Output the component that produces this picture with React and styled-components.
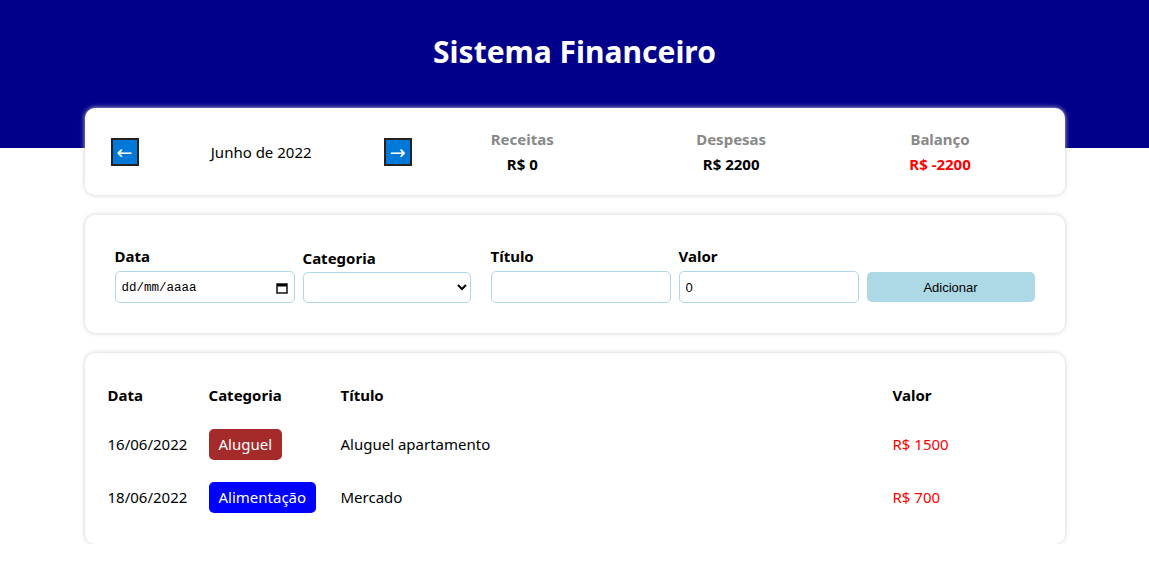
import React, { useState } from "react";
import styled, { createGlobalStyle } from "styled-components";

const GlobalStyle = createGlobalStyle`
  body {
    margin: 0;
    font-family: "Noto Sans", "Open Sans", sans-serif;
    background: #fff;
    color: #000;
  }
`;

const Header = styled.header`
  background-color: #00008b;
  height: 148px;
  padding-top: 10px;
  box-sizing: border-box;
  text-align: center;
`;

const HeaderText = styled.h1`
  margin: 21px 0 0;
  color: #fff;
  font-size: 30px;
  line-height: 42px;
  font-weight: 700;
`;

const Body = styled.div`
  width: 980px;
  margin: -40px auto 0;
  display: flex;
  flex-direction: column;
  gap: 20px;
`;

const Card = styled.div`
  background: #fff;
  border-radius: 10px;
  box-shadow: 0 0 5px #ccc;
  padding: ${({ $pad }) => $pad || "20px"};
`;

const InfoRow = styled.div`
  display: flex;
  align-items: center;
  height: 47px;
`;

const MonthArea = styled.div`
  flex: 1;
  display: flex;
  align-items: center;
  justify-content: space-between;
`;

const MonthArrow = styled.button`
  width: 28px;
  height: 28px;
  margin: 0 6px;
  padding: 0;
  background: #0078d7;
  border: 2px solid #222;
  color: #fff;
  font-size: 19px;
  line-height: 22px;
  font-family: "DejaVu Sans", sans-serif;
  cursor: pointer;
`;

const MonthTitle = styled.div`
  font-size: 15px;
`;

const ResumeArea = styled.div`
  flex: 2;
  display: flex;
`;

const ResumeItem = styled.div`
  flex: 1;
  text-align: center;
`;

const ResumeTitle = styled.div`
  color: #888;
  font-weight: 700;
  font-size: 15px;
  line-height: 20px;
  margin-bottom: 5px;
`;

const ResumeValue = styled.div`
  color: ${({ $color }) => $color || "#000"};
  font-weight: 700;
  font-size: 15px;
  line-height: 20px;
`;

const FormRow = styled.div`
  display: flex;
  align-items: flex-end;
`;

const Field = styled.label`
  display: flex;
  flex-direction: column;
  width: ${({ $w }) => $w}px;
  margin-right: ${({ $mr }) => $mr || 0}px;
`;

const FieldTitle = styled.div`
  font-weight: 700;
  font-size: 15px;
  line-height: 22px;
  margin-bottom: ${({ $mb }) => $mb ?? 4}px;
`;

const inputBase = `
  box-sizing: border-box;
  height: 32px;
  width: 100%;
  border: 1px solid #add8e6;
  border-radius: 5px;
  padding: 0 6px;
  font-size: 13px;
  font-family: "Liberation Sans", Arial, sans-serif;
  background: #fff;
  outline: none;
`;

const Input = styled.input`
  ${inputBase}
`;

const DateBox = styled.div`
  ${inputBase}
  display: flex;
  align-items: center;
  justify-content: space-between;
  padding-top: 2px;
  font-family: "Liberation Mono", monospace;
  font-size: 12.5px;
  color: #000;
`;

const Select = styled.select`
  ${inputBase}
  height: 31px;
  padding: 0 4px;
`;

const AddButton = styled.button`
  width: 168px;
  height: 30px;
  margin-bottom: 1px;
  border: none;
  border-radius: 5px;
  background: #add8e6;
  font-family: "Liberation Sans", Arial, sans-serif;
  font-size: 13px;
  color: #000;
  cursor: pointer;
`;

const Table = styled.table`
  width: 100%;
  border-collapse: collapse;
`;

const Th = styled.th`
  width: ${({ $w }) => ($w ? `${$w}px` : "auto")};
  text-align: left;
  font-size: 15px;
  line-height: 21px;
  padding: 12px 0 12px 3px;
`;

const Td = styled.td`
  font-size: 15px;
  line-height: 31px;
  padding: 11px 0 11px 3px;
  color: ${({ $color }) => $color || "#000"};
`;

const Category = styled.span`
  display: inline-block;
  vertical-align: top;
  padding: 0 10px;
  height: 31px;
  line-height: 31px;
  border-radius: 5px;
  color: #fff;
  background-color: ${({ $color }) => $color};
`;

const CalendarIcon = () => (
  <svg width="12" height="12" viewBox="0 0 12 12">
    <rect x="1" y="2" width="10" height="9" fill="none" stroke="#000" strokeWidth="1.4" />
    <rect x="1" y="2" width="10" height="2.5" fill="#000" />
  </svg>
);

const items = [
  { date: "16/06/2022", category: "Aluguel", color: "#a52a2a", title: "Aluguel apartamento", value: 1500 },
  { date: "18/06/2022", category: "Alimentação", color: "#0000ff", title: "Mercado", value: 700 },
];

const App = () => {
  const [valor, setValor] = useState("0");

  return (
    <>
      <GlobalStyle />
      <Header>
        <HeaderText>Sistema Financeiro</HeaderText>
      </Header>
      <Body>
        <Card>
          <InfoRow>
            <MonthArea>
              <MonthArrow>←</MonthArrow>
              <MonthTitle>Junho de 2022</MonthTitle>
              <MonthArrow>→</MonthArrow>
            </MonthArea>
            <ResumeArea>
              <ResumeItem>
                <ResumeTitle>Receitas</ResumeTitle>
                <ResumeValue>R$ 0</ResumeValue>
              </ResumeItem>
              <ResumeItem>
                <ResumeTitle>Despesas</ResumeTitle>
                <ResumeValue>R$ 2200</ResumeValue>
              </ResumeItem>
              <ResumeItem>
                <ResumeTitle>Balanço</ResumeTitle>
                <ResumeValue $color="red">R$ -2200</ResumeValue>
              </ResumeItem>
            </ResumeArea>
          </InfoRow>
        </Card>

        <Card $pad="30px 30px">
          <FormRow>
            <Field $w={180} $mr={8}>
              <FieldTitle $mb={4}>Data</FieldTitle>
              <DateBox>
                <span>dd/mm/aaaa</span>
                <CalendarIcon />
              </DateBox>
            </Field>
            <Field $w={168} $mr={20}>
              <FieldTitle $mb={3}>Categoria</FieldTitle>
              <Select defaultValue="">
                <option value=""></option>
                <option value="food">Alimentação</option>
                <option value="rent">Aluguel</option>
                <option value="salary">Salário</option>
              </Select>
            </Field>
            <Field $w={180} $mr={8}>
              <FieldTitle>Título</FieldTitle>
              <Input type="text" />
            </Field>
            <Field $w={180} $mr={8}>
              <FieldTitle>Valor</FieldTitle>
              <Input type="number" value={valor} onChange={(e) => setValor(e.target.value)} />
            </Field>
            <AddButton>Adicionar</AddButton>
          </FormRow>
        </Card>

        <Card>
          <Table>
            <thead>
              <tr>
                <Th $w={98}>Data</Th>
                <Th $w={129}>Categoria</Th>
                <Th>Título</Th>
                <Th $w={152}>Valor</Th>
              </tr>
            </thead>
            <tbody>
              {items.map((item) => (
                <tr key={item.date}>
                  <Td>{item.date}</Td>
                  <Td>
                    <Category $color={item.color}>{item.category}</Category>
                  </Td>
                  <Td>{item.title}</Td>
                  <Td $color="red">R$ {item.value}</Td>
                </tr>
              ))}
            </tbody>
          </Table>
        </Card>
      </Body>
    </>
  );
};

export default App;
